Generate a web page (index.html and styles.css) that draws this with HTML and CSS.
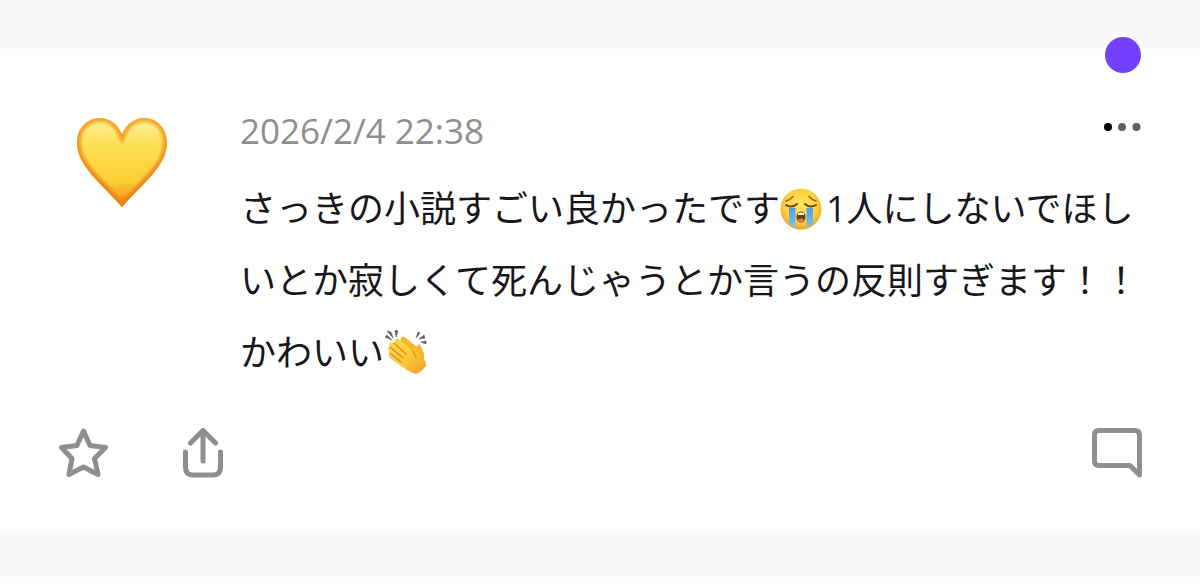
FILE: index.html
```
<!DOCTYPE html>
<html lang="ja">
<head>
<meta charset="utf-8">
<title>メッセージ</title>
<meta name="viewport" content="width=device-width,initial-scale=1">
<link rel="stylesheet" href="styles.css">
</head>
<body>

<main class="feed">
  <article class="card">
    <span class="unread" role="status" aria-label="未読"></span>

    <!-- ===== Message ===== -->
    <div class="message">
      <div class="avatar">
        <svg class="heart" viewBox="0 0 90 90" role="img" aria-label="ハート">
          <defs>
            <linearGradient id="heartFill" x1="0" y1="0" x2="0" y2="1">
              <stop offset="0" stop-color="#fff3a0"/>
              <stop offset=".3" stop-color="#fde056"/>
              <stop offset=".7" stop-color="#fbd038"/>
              <stop offset="1" stop-color="#f08a18"/>
            </linearGradient>
            <linearGradient id="heartEdge" x1="0" y1="0" x2="0" y2="1">
              <stop offset="0" stop-color="#f3a92b"/>
              <stop offset="1" stop-color="#ec7d16"/>
            </linearGradient>
            <filter id="soft" x="-10%" y="-10%" width="120%" height="120%"><feGaussianBlur stdDeviation="1.6"/></filter>
            <clipPath id="heartClip"><path d="M45 17C40 6 32 1 23 1C10 1 0 11 0 26C0 49 24 66 45 90C66 66 90 49 90 26C90 11 80 1 67 1C58 1 50 6 45 17Z"/></clipPath>
          </defs>
          <g clip-path="url(#heartClip)">
            <rect width="90" height="90" fill="url(#heartFill)"/>
            <path d="M45 17C40 6 32 1 23 1C10 1 0 11 0 26C0 49 24 66 45 90C66 66 90 49 90 26C90 11 80 1 67 1C58 1 50 6 45 17Z" fill="none" stroke="url(#heartEdge)" stroke-width="8" filter="url(#soft)"/>
          </g>
        </svg>
      </div>
      <div class="content">
        <header class="meta">
          <time datetime="2026-02-04T22:38">2026/2/4 22:38</time>
          <button class="more" type="button" aria-label="メニュー">
            <svg viewBox="0 0 38 10">
              <circle cx="4" cy="6" r="4" fill="#000"/>
              <circle cx="18" cy="6" r="4" fill="#606060"/>
              <circle cx="32.500" cy="6" r="4" fill="#606060"/>
            </svg>
          </button>
        </header>
        <p class="text">さっきの小説すごい良かったです<svg class="emoji" viewBox="0 0 46 46" role="img" aria-label="大泣き">
            <defs>
              <radialGradient id="faceFill" cx=".5" cy=".42" r=".6">
                <stop offset="0" stop-color="#ffe75c"/>
                <stop offset=".65" stop-color="#fdd23d"/>
                <stop offset="1" stop-color="#ee9a22"/>
              </radialGradient>
              <linearGradient id="tear" x1="0" y1="0" x2="0" y2="1">
                <stop offset="0" stop-color="#4d9fe0"/>
                <stop offset="1" stop-color="#79c5f3"/>
              </linearGradient>
            </defs>
            <circle cx="21" cy="23" r="20.500" fill="url(#faceFill)"/>
            <path d="M9 22H15.500V41Q12 40 9 37.500ZM26.500 22H33V37.500Q30 40 26.500 41Z" fill="url(#tear)"/>
            <path d="M6 15Q10 14 13 10.500M36 15Q32 14 29 10.500" fill="none" stroke="#9a6218" stroke-width="1.500" stroke-linecap="round"/>
            <path d="M6 19Q12 22.500 17 18M25 18Q30 22.500 36 19" fill="none" stroke="#66451c" stroke-width="2" stroke-linecap="round"/>
            <ellipse cx="21" cy="31" rx="4.500" ry="5.500" fill="#65401b"/>
            <path d="M18 27.500Q21 25.500 24 27.500V29H18Z" fill="#fff"/>
            <path d="M17.500 34Q21 31 24.500 34Q21 38 17.500 34Z" fill="#e9893f"/>
          </svg>1人にしないでほしいとか寂しくて死んじゃうとか言うの反則すぎます！！かわいい<svg class="emoji" viewBox="0 0 46 46" role="img" aria-label="拍手">
            <defs>
              <linearGradient id="handFill" x1="0" y1="0" x2="1" y2="1">
                <stop offset="0" stop-color="#ffdc52"/>
                <stop offset=".6" stop-color="#fbc437"/>
                <stop offset="1" stop-color="#e99d25"/>
              </linearGradient>
            </defs>
            <path d="M3 1L7 2L9 8ZM11 0L14 1L12 7ZM1 7L3 5L8 10ZM32 8L34 2L36 3ZM35 9L40 5L41 8ZM37 12L42 11L42 14Z" fill="#5d5f62" stroke="#5d5f62" stroke-width=".6" stroke-linejoin="round"/>
            <path d="M17 8Q19 5 22 8L33 17Q34 13 36 15Q41 23 40 29Q43 33 42 36L34 43L14 27Z" fill="#f2b733"/>
            <path d="M11 10Q13 7 16 10L29 21Q29 16 32 18Q36 23 36 29L41 36Q38 42 32 44Q25 42 20 38L6 28Q3 25 6 23L4 20Q3 17 6 17L5 14Q6 11 10 13Z" fill="url(#handFill)"/>
            <path d="M10 13L22 24M6 17L19 28M6 23L17 32M29 21L32 27" fill="none" stroke="#d58b1e" stroke-width="1.200" stroke-linecap="round"/>
          </svg></p>
      </div>
    </div>

    <!-- ===== Actions ===== -->
    <footer class="actions">
      <button class="action" type="button" aria-label="お気に入り">
        <svg width="50" height="50" viewBox="0 0 50 50">
          <path d="M25.500 3L32 17.500L47.500 19.500L36.500 30.500L40 46.500L25.500 39L11 46.500L14 30.500L3.500 19.500L19 17.500Z"/>
        </svg>
      </button>
      <button class="action" type="button" aria-label="共有">
        <svg width="42" height="50" viewBox="0 0 42 50">
          <path d="M21 33V3M8.500 15L21 2.500L33.500 15M3.500 24V39Q3.500 47 11 47H31Q38.500 47 38.500 39V24"/>
        </svg>
      </button>
      <button class="action reply" type="button" aria-label="返信">
        <svg width="50" height="50" viewBox="0 0 50 50">
          <path d="M7 2.500H43Q47.500 2.500 47.500 7V47L38 37.500H7Q2.500 37.500 2.500 33V7Q2.500 2.500 7 2.500Z"/>
        </svg>
      </button>
    </footer>
  </article>
</main>

</body>
</html>
```
FILE: styles.css
```
/* ---------- Base ---------- */
*{margin:0;padding:0;box-sizing:border-box}
body{background:#fff;color:#17171c;font-family:"Open Sans","Noto Sans CJK JP",sans-serif}
button{border:none;background:none;cursor:pointer}
svg{display:block}

/* ---------- Feed ---------- */
.feed{padding:49px 0 48px;background:#f9f9f9}
.card{position:relative;padding:60px 58px 51px;background:#fff}
.unread{position:absolute;top:-12px;right:59px;width:36px;height:36px;border-radius:50%;background:#7340ff}

/* ---------- Message ---------- */
.message{display:flex}
.avatar{flex:none;width:182px;padding:8px 0 0 19px}
.heart{width:90px;height:90px}
.content{flex:1;min-width:0}
.meta{display:flex;justify-content:space-between;margin-bottom:20px;color:#8e8e8e;font-size:35px;line-height:44px}
.more{height:34px}
.more svg{width:38px;height:10px}
.text{font-size:36px;line-height:72px}
.emoji{display:inline-block;width:46px;height:46px;vertical-align:-10px}

/* ---------- Actions ---------- */
.actions{display:flex;gap:74px;margin-top:39px}
.action svg{fill:none;stroke:#8e8e8e;stroke-width:5;stroke-linecap:round;stroke-linejoin:round}
.reply{margin-left:auto}
```
